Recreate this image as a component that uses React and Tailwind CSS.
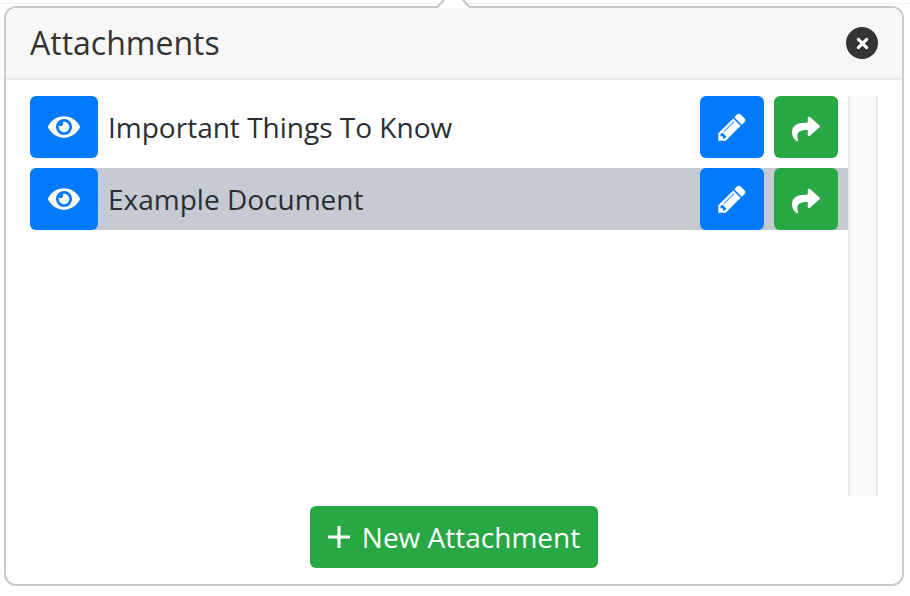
import React from "react";
import { FaEye, FaShare, FaTimes } from "react-icons/fa";

function PencilIcon({ className = "" }) {
  return (
    <svg viewBox="0 0 1792 1792" fill="currentColor" className={className}>
      <path d="M491 1536l91-91-235-235-91 91v107h128v128h107zm523-928q0-22-22-22-10 0-17 7l-542 542q-7 7-7 17 0 22 22 22 10 0 17-7l542-542q7-7 7-17zm-54-192l416 416-832 832h-416v-416zm683 96q0 53-37 91l-166 166-416-416 166-165q36-38 90-38 53 0 91 38l235 234q37 39 37 90z" />
    </svg>
  );
}

function Row({ label, selected }) {
  return (
    <div className={`flex items-center h-[62px] rounded-l-[6px] ${selected ? "bg-[#c6cbd3]" : ""}`}>
      <button className="flex items-center justify-center w-[68px] h-[62px] rounded-[6px] bg-[#007bff] text-white">
        <FaEye className="w-[32px] h-[32px]" />
      </button>
      <span className="flex-1 ml-[10px] text-[28px] text-[#2a2e33] antialiased">{label}</span>
      <button className="flex items-center justify-center w-[64px] h-[62px] rounded-[6px] bg-[#007bff] text-white">
        <PencilIcon className="w-[32px] h-[32px]" />
      </button>
      <button className="flex items-center justify-center w-[64px] h-[62px] ml-[10px] mr-[10px] rounded-[6px] bg-[#28a745] text-white">
        <FaShare className="w-[28px] h-[28px] mt-[3px]" />
      </button>
    </div>
  );
}

export default function App() {
  return (
    <div className="relative w-[910px] h-[596px] overflow-hidden bg-white pt-[6px] pl-[4px] font-['Open_Sans',sans-serif]">
      {/* popover arrow */}
      <svg className="absolute left-[430px] top-0 z-10" width="48" height="9" viewBox="0 0 48 9">
        <path d="M7 8 L14.5 0 H32.5 L40 8 Z" fill="#fff" />
        <path d="M7 7.5 L14 0 M40 7.5 L33 0" stroke="#c4c4c4" strokeWidth="2" fill="none" />
      </svg>
      <div className="absolute left-0 right-0 top-[3px] h-[1px] bg-[#f0f0f0]" />

      <div className="relative w-[900px] h-[580px] border-2 border-[#cbcbcb] rounded-[12px] overflow-hidden flex flex-col bg-white">
        <div className="flex items-center justify-between h-[72px] pl-[24px] pr-[24px] bg-[#f7f7f7] border-b-2 border-[#ebebeb]">
          <h3 className="text-[32px] text-[#333] antialiased">Attachments</h3>
          <button className="flex items-center justify-center w-[32px] h-[32px] rounded-full bg-[#343434] text-white">
            <FaTimes className="w-[17px] h-[17px]" />
          </button>
        </div>
        <div className="flex flex-1 pt-[16px] pl-[24px] pr-[24px]">
          <div className="flex-1 flex flex-col gap-[10px]">
            <Row label="Important Things To Know" />
            <Row label="Example Document" selected />
          </div>
          <div className="w-[30px] h-[400px] bg-[#fafafa] border-x-2 border-[#ebebeb]" />
        </div>
        <div className="flex justify-center pb-[16px]">
          <button className="flex items-center justify-center w-[288px] h-[62px] rounded-[6px] bg-[#28a745] text-white text-[28px] antialiased">
            <svg viewBox="0 0 22 22" className="w-[22px] h-[22px] mr-[12px]" fill="none" stroke="currentColor" strokeWidth="3.2">
              <path d="M11 0v22M0 11h22" />
            </svg>
            New Attachment
          </button>
        </div>
      </div>
    </div>
  );
}
